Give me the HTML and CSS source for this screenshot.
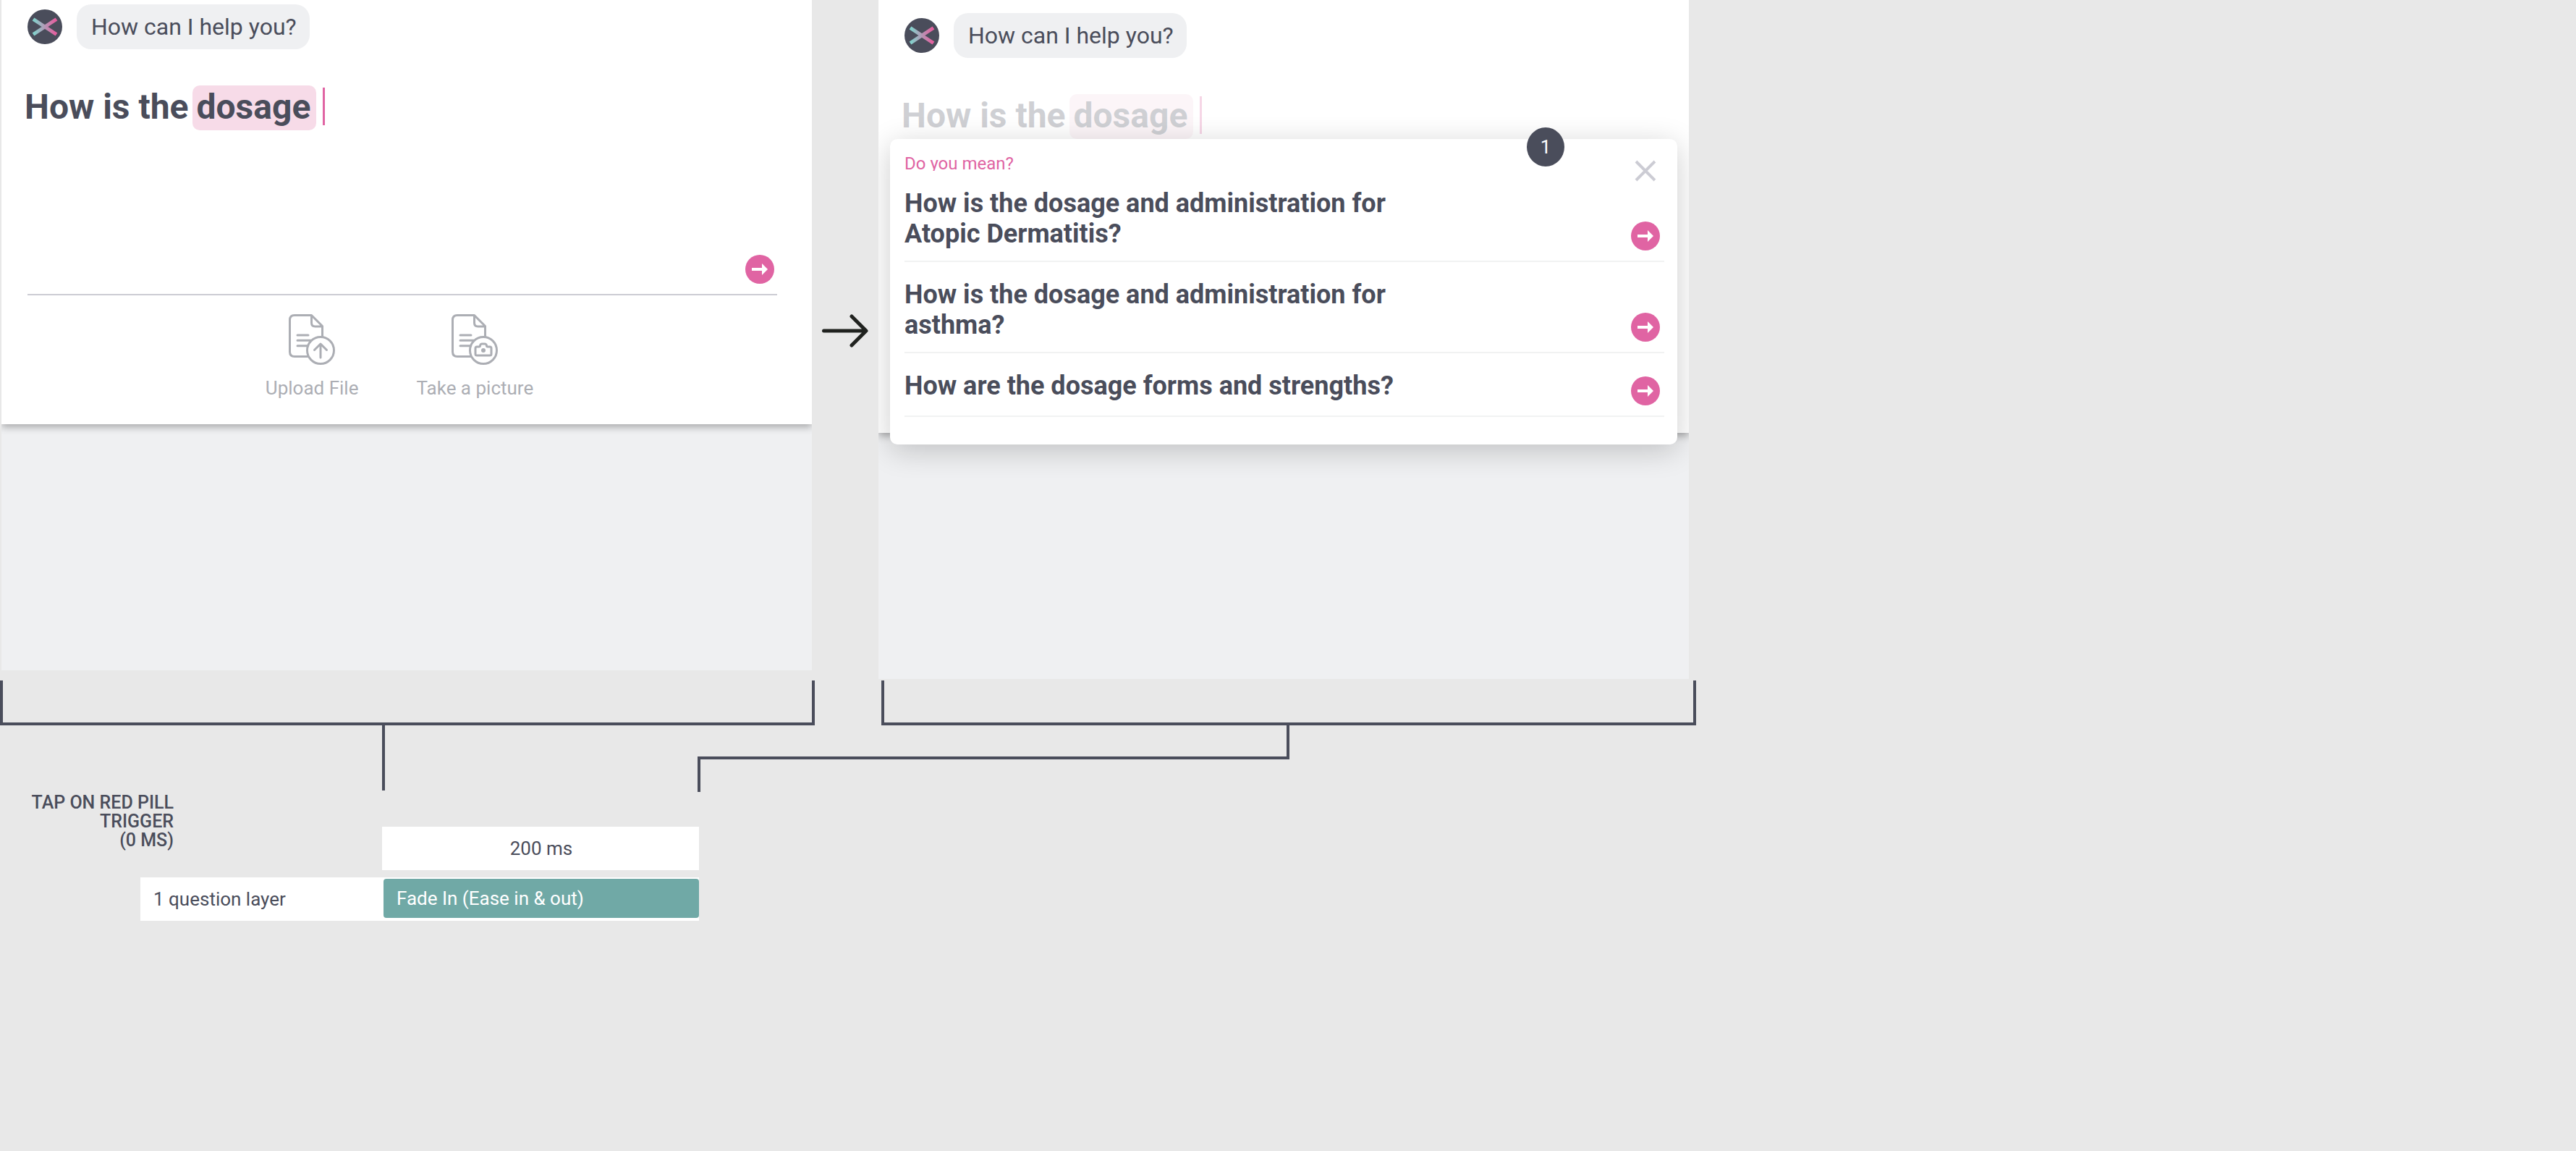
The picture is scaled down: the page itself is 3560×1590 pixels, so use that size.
FILE: index.html
```html
<!DOCTYPE html>
<html lang="en">
<head>
<meta charset="utf-8">
<meta name="viewport" content="width=device-width, initial-scale=1">
<title>Question suggestions – motion spec</title>
<link rel="stylesheet" href="styles.css">
</head>
<body>
<svg class="defs" width="0" height="0" aria-hidden="true">
  <defs>
    <linearGradient id="brand" gradientUnits="userSpaceOnUse" x1="6" y1="24" x2="42" y2="24">
      <stop offset="0.1" stop-color="#84cfcb"/>
      <stop offset="0.9" stop-color="#e3609f"/>
    </linearGradient>
    <symbol id="logo" viewBox="0 0 48 48">
      <circle cx="24" cy="24" r="24" fill="#4a4d5b"/>
      <path d="M8 13.500L40 34.500M8 34.500L40 13.500" stroke="url(#brand)" stroke-width="5" fill="none"/>
    </symbol>
    <symbol id="go" viewBox="0 0 40 40">
      <circle cx="20" cy="20" r="20" fill="#e064a3"/>
      <path d="M9 18H23V12L31 20L23 28V22H9Z" fill="#fff"/>
    </symbol>
    <symbol id="doc" viewBox="0 0 64 70">
      <g fill="none" stroke="#acaeb4" stroke-width="3" stroke-linecap="round" stroke-linejoin="round">
        <path d="M27 58.500H8Q1.500 58.500 1.500 52V8Q1.500 1.500 8 1.500H31.500L46.500 16.500V30M31.500 1.500V12Q31.500 17 36.500 17H46.500"/>
        <path d="M12 29H27M12 36.300H31M12 43.700H26"/>
        <circle cx="44" cy="50" r="18.500"/>
      </g>
    </symbol>
  </defs>
</svg>
<main>
  <section class="screens">
    <article class="screen screen-before">
      <div class="card">
        <div class="chat">
          <svg class="avatar" role="img" aria-label="Assistant"><use href="#logo"/></svg>
          <p class="bubble">How can I help you?</p>
        </div>
        <div class="composer">
          <div class="prompt" role="textbox" contenteditable="true" aria-label="Your question" spellcheck="false">
            <span>How is the</span><mark>dosage</mark><span class="caret"></span>
          </div>
          <button class="go composer-send" type="button" aria-label="Send question"><svg><use href="#go"/></svg></button>
        </div>
        <div class="actions">
          <button class="action" type="button">
            <svg viewBox="0 0 64 70"><use href="#doc"/><path d="M44 60V41M35.500 49.500L44 41L52.500 49.500" class="line"/></svg>
            Upload File
          </button>
          <button class="action" type="button">
            <svg viewBox="0 0 64 70"><use href="#doc"/><path d="M35 45H38Q39.500 45 39.500 43.500Q40 41 42 41H46Q48 41 48.500 43.500Q48.500 45 50 45H53Q55 45 55 47V55Q55 57 53 57H35Q33 57 33 55V47Q33 45 35 45Z" class="line"/><circle cx="44" cy="50" r="3" class="dot"/></svg>
            Take a picture
          </button>
        </div>
      </div>
    </article>

    <svg class="step-arrow" viewBox="0 0 64 46" role="img" aria-label="then"><path d="M2.500 23H60M41 3L61 23L41 43"/></svg>

    <article class="screen screen-after">
      <div class="card">
        <div class="chat">
          <svg class="avatar" role="img" aria-label="Assistant"><use href="#logo"/></svg>
          <p class="bubble">How can I help you?</p>
        </div>
        <div class="prompt prompt-faded">
          <span>How is the</span><mark>dosage</mark><span class="caret"></span>
        </div>
      </div>
      <section class="suggestions" aria-labelledby="suggest-title">
        <span class="badge">1</span>
        <header>
          <h2 id="suggest-title">Do you mean?</h2>
          <button class="close" type="button" aria-label="Close"><svg viewBox="0 0 40 40"><path d="M7 7L33 33M33 7L7 33"/></svg></button>
        </header>
        <ul>
          <li>
            <p>How is the dosage and administration for Atopic Dermatitis?</p>
            <button class="go" type="button" aria-label="Ask about Atopic Dermatitis"><svg><use href="#go"/></svg></button>
          </li>
          <li>
            <p>How is the dosage and administration for asthma?</p>
            <button class="go" type="button" aria-label="Ask about asthma"><svg><use href="#go"/></svg></button>
          </li>
          <li>
            <p>How are the dosage forms and strengths?</p>
            <button class="go" type="button" aria-label="Ask about forms and strengths"><svg><use href="#go"/></svg></button>
          </li>
        </ul>
      </section>
    </article>
  </section>

  <div class="brackets" aria-hidden="true">
    <div class="bracket"></div>
    <div class="bracket bracket-after"></div>
  </div>
  <div class="connectors" aria-hidden="true">
    <div class="stem"></div>
    <div class="elbow"><div class="elbow-top"></div><div class="elbow-bottom"></div></div>
  </div>

  <section class="timeline">
    <p class="trigger">TAP ON RED PILL<br>TRIGGER<br>(0 MS)</p>
    <p class="duration">200 ms</p>
    <p class="layer">1 question layer</p>
    <div class="track"><p class="phase">Fade In (Ease in &amp; out)</p></div>
  </section>
</main>
</body>
</html>
```
FILE: styles.css
```css
:root {
  --ink: #4a4d5b;
  --pink: #e064a3;
  --muted: #acaeb4;
  --line: #ccccd4;
}

* { box-sizing: border-box; }

body {
  margin: 0;
  background: #e8e8e8;
  color: var(--ink);
  font-family: Roboto, "Liberation Sans", sans-serif;
  font-size: 26px;
  line-height: 32px;
}

p, h2, ul { margin: 0; padding: 0; }
ul { list-style: none; }

button {
  padding: 0;
  border: 0;
  background: none;
  color: inherit;
  font: inherit;
  cursor: pointer;
}

svg { display: block; }
.defs { position: absolute; }

/* Screens */
.screens {
  display: grid;
  grid-template-columns: minmax(0, 1120fr) 92px minmax(0, 1120fr) minmax(0, 1226fr);
  align-items: start;
  padding-left: 2px;
}

.screen {
  position: relative;
  overflow: hidden;
  padding-bottom: 340px;
  background: #eff0f2;
}

.card {
  padding: 6px 48px 34px 36px;
  background: #fff;
  box-shadow: 0 4px 10px rgba(0, 0, 0, 0.3);
}

.screen-after .card {
  min-height: 598px;
  padding-top: 18px;
}

.chat {
  display: flex;
  align-items: center;
  gap: 20px;
  margin-bottom: 50px;
}

.avatar { width: 48px; height: 48px; }

.bubble {
  padding: 0 18px 0 20px;
  border-radius: 20px;
  background: #eff0f2;
  font-size: 32px;
  line-height: 62px;
}

.composer {
  display: flex;
  flex-direction: column;
  min-height: 290px;
  border-bottom: 2px solid var(--line);
}

.prompt {
  display: flex;
  align-items: flex-start;
  gap: 5px;
  margin-left: -4px;
  outline: 0;
  font-size: 48px;
  font-weight: 700;
  line-height: 60px;
}

.prompt mark {
  padding: 0 8px 2px 6px;
  border-radius: 10px;
  background: #f7dbe8;
  color: inherit;
}

.prompt-faded { opacity: 0.26; }

.caret {
  width: 3px;
  height: 52px;
  margin: 3px 0 0 4px;
  background: var(--pink);
}

.go, .go svg { width: 40px; height: 40px; }
.go { flex: none; }

.composer-send {
  align-self: flex-end;
  margin: auto 4px 14px;
}

.actions {
  display: flex;
  justify-content: center;
  gap: 80px;
  padding: 26px 8px 0 0;
}

.action {
  display: flex;
  flex-direction: column;
  align-items: center;
  gap: 16px;
  color: var(--muted);
}

.action svg { width: 64px; height: 70px; }
.action .line {
  fill: none;
  stroke: var(--muted);
  stroke-width: 3px;
  stroke-linecap: round;
  stroke-linejoin: round;
}
.action .dot { fill: var(--muted); }

.step-arrow {
  width: 64px;
  height: 46px;
  margin: 434px auto 0;
  fill: none;
  stroke: #20221f;
  stroke-width: 5px;
  stroke-linecap: round;
  stroke-linejoin: round;
}

/* Suggestion layer over the second screen */
.suggestions {
  position: absolute;
  top: 192px;
  left: 16px;
  right: 16px;
  padding: 24px 18px 38px 20px;
  border-radius: 10px;
  background: #fff;
  box-shadow: 0 8px 40px rgba(0, 0, 0, 0.2);
}

.badge {
  position: absolute;
  top: -16px;
  right: 156px;
  width: 52px;
  height: 54px;
  border-radius: 50%;
  background: var(--ink);
  color: #fff;
  line-height: 54px;
  text-align: center;
}

.suggestions header {
  display: flex;
  align-items: flex-start;
  justify-content: space-between;
  height: 20px;
}

.suggestions h2 {
  overflow: hidden;
  color: var(--pink);
  font-size: 24px;
  font-weight: 400;
  line-height: 20px;
}

.close { margin-right: 6px; }
.close svg {
  width: 40px;
  height: 40px;
  stroke: var(--line);
  stroke-width: 4px;
}

.suggestions li {
  display: flex;
  align-items: flex-end;
  justify-content: space-between;
  min-height: 88px;
  padding: 24px 6px 14px 0;
  border-bottom: 2px solid #f1f2f2;
}

.suggestions p {
  align-self: flex-start;
  max-width: 700px;
  padding-bottom: 2px;
  font-size: 36px;
  font-weight: 700;
  line-height: 42px;
}

/* Brackets and connectors to the timeline */
.brackets {
  display: grid;
  grid-template-columns: minmax(0, 1126fr) 92px minmax(0, 1126fr) minmax(0, 1216fr);
  padding-top: 2px;
}

.bracket {
  height: 62px;
  border: 4px solid var(--ink);
  border-top: 0;
}

.bracket-after { grid-column: 3; }

.connectors {
  display: grid;
  grid-template-columns: 528fr 436fr 818fr 1778fr;
  height: 92px;
}

.stem {
  grid-column: 2;
  height: 90px;
  border-left: 4px solid var(--ink);
}

.elbow-top {
  height: 47px;
  border: solid var(--ink);
  border-width: 0 4px 4px 0;
}

.elbow-bottom {
  height: 45px;
  border-left: 4px solid var(--ink);
}

/* Timeline */
.timeline {
  display: grid;
  grid-template-columns: 194fr 46fr 288fr 438fr 2594fr;
  row-gap: 10px;
  padding-bottom: 40px;
}

.trigger {
  grid-column: 1 / 3;
  padding: 2px 0 28px;
  font-size: 25px;
  font-weight: 500;
  line-height: 26px;
  text-align: right;
  white-space: nowrap;
}

.duration {
  grid-column: 4;
  align-self: end;
  padding-left: 2px;
  background: #fff;
  line-height: 60px;
  text-align: center;
}

.layer {
  grid-column: 2 / 4;
  padding-left: 18px;
  background: #fff;
  line-height: 60px;
  white-space: nowrap;
}

.track {
  grid-column: 4;
  padding: 2px 0 4px 2px;
  background: #fff;
}

.phase {
  padding-left: 18px;
  border-radius: 4px;
  background: #70a9a6;
  color: #fff;
  line-height: 54px;
  white-space: nowrap;
}
```
